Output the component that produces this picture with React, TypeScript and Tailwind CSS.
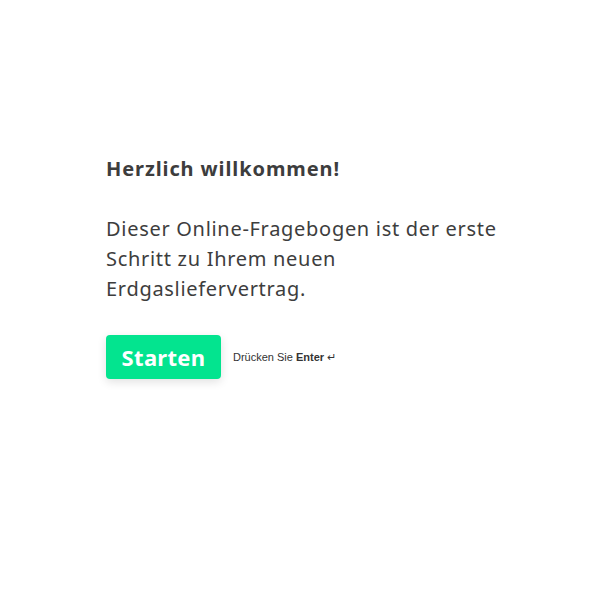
export default function App() {
  return (
    <div className="w-[600px] h-[600px] bg-white text-[#3d3d3d]" style={{ fontFamily: '"Noto Sans", Lato, sans-serif' }}>
      <div className="pl-[106px] pt-[155px]">
        <h1 className="text-[20px] leading-[28px] font-bold tracking-[0.9px]">Herzlich willkommen!</h1>
        <p className="mt-[31px] w-[400px] text-[20px] leading-[30px] tracking-[0.7px]">
          Dieser Online-Fragebogen ist der erste Schritt zu Ihrem neuen Erdgasliefervertrag.
        </p>
        <div className="mt-[31px] flex items-center gap-3">
          <button className="h-[44px] w-[115px] rounded-[4px] bg-[#03e48f] text-white text-[22px] font-bold tracking-[0.3px] shadow-[0_3px_10px_rgba(0,0,0,0.12)]">
            Starten
          </button>
          <span className="text-[11px] text-[#333]" style={{ fontFamily: '"Liberation Sans", Arial, sans-serif' }}>
            Drücken Sie <b>Enter</b> ↵
          </span>
        </div>
      </div>
    </div>
  );
}
